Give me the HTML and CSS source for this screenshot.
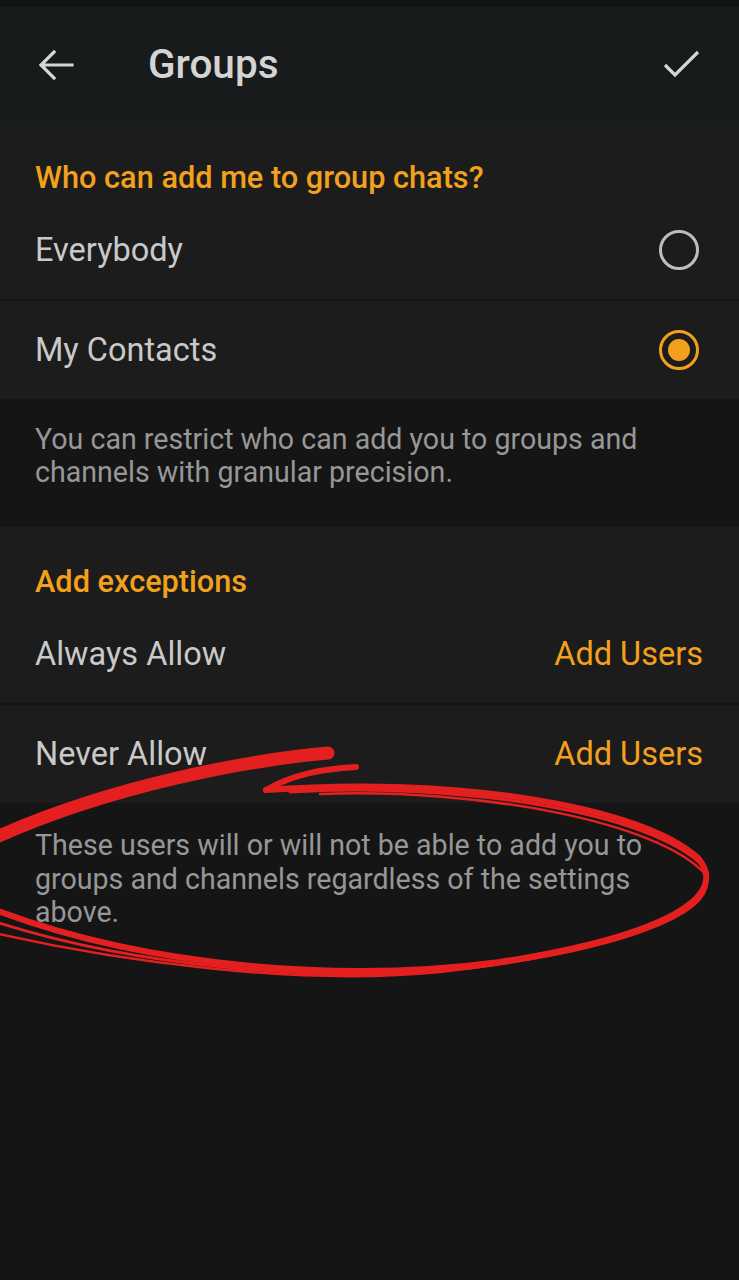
FILE: index.html
```html
<!DOCTYPE html>
<html>
<head>
<meta charset="utf-8">
<link rel="stylesheet" href="styles.css">
</head>
<body>
<div class="statusbar"></div>
<header class="toolbar">
  <svg class="icon back" width="40" height="40" viewBox="0 0 40 40">
    <path d="M36 20 H6 M18 7 L5 20 L18 33" fill="none" stroke="#d6d6d6" stroke-width="3.2" stroke-linecap="square"/>
  </svg>
  <h1 class="title">Groups</h1>
  <svg class="icon check" width="44" height="40" viewBox="0 0 44 40">
    <path d="M5 20 L15 30 L38 7" fill="none" stroke="#d6d6d6" stroke-width="3.2"/>
  </svg>
</header>

<section class="section">
  <div class="section-header">Who can add me to group chats?</div>
  <div class="row">
    <span class="row-label">Everybody</span>
    <span class="radio"></span>
  </div>
  <div class="divider"></div>
  <div class="row">
    <span class="row-label">My Contacts</span>
    <span class="radio checked"></span>
  </div>
</section>
<div class="info">You can restrict who can add you to groups and channels with granular precision.</div>

<section class="section">
  <div class="section-header">Add exceptions</div>
  <div class="row">
    <span class="row-label">Always Allow</span>
    <span class="row-value">Add Users</span>
  </div>
  <div class="divider"></div>
  <div class="row">
    <span class="row-label">Never Allow</span>
    <span class="row-value">Add Users</span>
  </div>
</section>
<div class="info info-last">These users will or will not be able to add you to groups and channels regardless of the settings above.</div>

<svg class="scribble" width="739" height="260" viewBox="0 740 739 260">
  <g fill="none" stroke="#e3201f" stroke-linecap="round">
    <path d="M328 753 C 250 760, 110 785, -10 840" stroke-width="13"/>
    <path d="M356 767 C 320 769, 292 775, 266 790" stroke-width="6"/>
    <path d="M266 790 C 450 776, 640 805, 698 858 C 730 895, 670 935, 500 962 C 350 982, 150 970, -10 908" stroke-width="6"/>
    <path d="M290 792 C 460 782, 650 812, 703 866 C 722 905, 650 945, 470 968 C 320 984, 130 966, -10 920" stroke-width="3"/>
    <path d="M320 794 C 480 788, 660 822, 706 875 C 718 912, 630 950, 440 972 C 300 986, 120 962, -10 932" stroke-width="2.5"/>
  </g>
</svg>
</body>
</html>
```
FILE: styles.css
```css
html, body {
  margin: 0;
  padding: 0;
}
body {
  width: 739px;
  min-height: 1280px;
  background: #151515;
  font-family: Roboto, "Noto Sans", sans-serif;
  position: relative;
  overflow: hidden;
}
.statusbar {
  height: 7px;
  background: #121414;
}
.toolbar {
  height: 115px;
  background: #181b1b;
  display: flex;
  align-items: center;
  padding: 0 35px 0 36px;
  box-sizing: border-box;
}
.icon {
  display: block;
}
.back {
  margin-right: 72px;
}
.title {
  flex: 1;
  margin: 0;
  font-size: 40.5px;
  font-weight: 500;
  color: #d4d4d4;
  position: relative;
  top: -1px;
}
.section {
  background: #1c1c1c;
}
.section-header {
  padding: 40px 35px 7px;
  line-height: 32px;
  font-size: 30.7px;
  font-weight: 500;
  color: #f3a11d;
}
.row {
  height: 98px;
  display: flex;
  align-items: center;
  justify-content: space-between;
  padding: 0 36px 0 35px;
}
.row-label {
  font-size: 32.5px;
  color: #c9c9c9;
}
.row-value {
  font-size: 32.5px;
  color: #f3a11d;
}
.divider {
  height: 2px;
  background: #141414;
}
.radio {
  width: 40px;
  height: 40px;
  box-sizing: border-box;
  border-radius: 50%;
  border: 3px solid #bdbdbd;
  margin-right: 4px;
  position: relative;
}
.radio.checked {
  border-color: #f3a11d;
}
.radio.checked::after {
  content: "";
  position: absolute;
  left: 6px;
  top: 6px;
  width: 22px;
  height: 22px;
  border-radius: 50%;
  background: #f3a11d;
}
.info {
  background: #151515;
  padding: 24px 60px 34px 35px;
  font-size: 28.6px;
  line-height: 33px;
  color: #979797;
  border-bottom: 3px solid #111411;
}
.info-last {
  border-bottom: none;
  padding-top: 26px;
  line-height: 33.5px;
}
.scribble {
  position: absolute;
  left: 0;
  top: 740px;
  pointer-events: none;
}
```
